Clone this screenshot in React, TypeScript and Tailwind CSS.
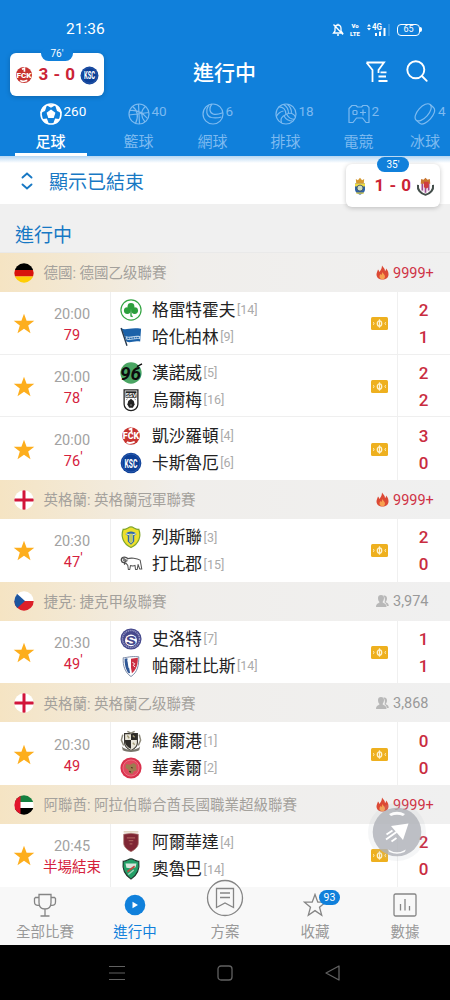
import type { ReactNode } from 'react';
import clsx from 'clsx';

type Team = { name: string; rank: number; crest: ReactNode };
type Match = { start: string; clock: string; tick?: boolean; home: Team; away: Team; score: [number, number] };
type League = { name: string; flag: ReactNode; viewers: string; hot?: boolean; matches: Match[] };

/* ---------- crests (24 x 24 viewBox) ---------- */

const Crest = ({ children, size = 22 }: { children: ReactNode; size?: number }) => (
  <svg viewBox="0 0 24 24" width={size} height={size} className="shrink-0 overflow-visible">
    {children}
  </svg>
);

const Fck = () => (
  <>
    <circle cx="12" cy="12" r="9.6" fill="#c8332f" />
    <path d="M9.5 5l3-1.2V8M7.5 18.5c3 2.5 5 .5 8.5 0" stroke="#fff" strokeWidth="2" fill="none" />
    <text x="12" y="15.8" textAnchor="middle" fontSize="9.5" fontWeight="900" fill="#fff" textLength="18" lengthAdjust="spacingAndGlyphs">FCK</text>
  </>
);

const Ksc = () => (
  <>
    <circle cx="12" cy="12" r="11.3" fill="#0d3f96" />
    <circle cx="12" cy="12" r="9.8" fill="none" stroke="#3e6fc0" strokeWidth=".6" />
    <text x="12" y="17" textAnchor="middle" fontSize="14" fontWeight="700" fill="#fff" textLength="14" lengthAdjust="spacingAndGlyphs">KSC</text>
  </>
);

const Furth = () => (
  <>
    <circle cx="12" cy="12" r="11" fill="#fff" stroke="#35a544" strokeWidth="1.3" />
    <circle cx="12" cy="8" r="3.7" fill="#2c9f3c" />
    <circle cx="8" cy="12.6" r="3.7" fill="#2c9f3c" />
    <circle cx="16" cy="12.6" r="3.7" fill="#2c9f3c" />
    <path d="M12 11v7.5l1.8.8" stroke="#2c9f3c" strokeWidth="1.5" fill="none" />
  </>
);

const Hertha = () => (
  <>
    <path d="M1.5 2.5c5 3 9-1.5 21.5.5l-1 14c-7-1.5-10 2-15 0L2.5 5z" fill="#1b62a9" />
    <path d="M1.2 2.2L7.6 21.5" stroke="#27394d" strokeWidth="1.5" />
    <path d="M6 11c5 2 9-1.5 16.5.2l-.2 3.3C16 13 12 16.5 7 14.7z" fill="#b9d2e8" />
    <path d="M8 13.2c5 1 7-1 13-.4" stroke="#1b62a9" strokeWidth="1.2" strokeDasharray="2 .7" fill="none" />
  </>
);

const Hannover = () => (
  <>
    <circle cx="12" cy="12" r="11.6" fill="#4aa563" />
    <text x="11.5" y="19.3" textAnchor="middle" fontSize="20" fontWeight="700" fontStyle="italic" fill="#0c0c0c" textLength="23" lengthAdjust="spacingAndGlyphs">96</text>
    <path d="M18.5 5l5.5-3" stroke="#0c0c0c" strokeWidth="1.5" />
  </>
);

const Ulm = () => (
  <>
    <path d="M4.5 1h15v15.5a7.5 7 0 0 1-15 0z" fill="#fff" stroke="#222" strokeWidth="1.4" />
    <path d="M6 2.5h12v7H6z" fill="#222" />
    <text x="12" y="8.3" textAnchor="middle" fontSize="6.5" fontWeight="700" fill="#fff">SSV</text>
    <path d="M8 17l1-4 3-2.5 3 2.5 1 4-2 3.5h-4z" fill="#222" />
    <path d="M6.5 12l2-1.5M17.5 12l-2-1.5M11 17.5h2" stroke="#999" strokeWidth="1" />
  </>
);

const Leeds = () => (
  <>
    <path d="M3.5 3.5c3 1 5.5-2.5 8.5-2.5s5.5 3.5 8.5 2.5c3 8 0 16-8.5 20C3.5 19.5.5 11.5 3.5 3.5z" fill="#eee02c" stroke="#7fa52c" strokeWidth="1.3" />
    <path d="M6 9c2-4 10-4 12 0l-2.5 1.5V17L12 20.5 8.5 17v-6.5z" fill="#2d67ae" />
    <path d="M10.2 8.5h3.6V17L12 19l-1.8-2z" fill="#f3ec7a" />
    <path d="M6.5 8.5L10 9.5M17.5 8.5L14 9.5" stroke="#e9f0d0" strokeWidth="1.2" />
    <path d="M12 9v9" stroke="#7fa23c" strokeWidth="1" />
  </>
);

const Derby = () => (
  <>
    <path d="M7.5 6.5c4-1.6 11-1 14.5 1.3l1.8 9.7h-2.3l-1.8-5-.9 5.500h-1.900l-.5-4.500c-2 1.200-3 .5-5 .2l-.7 4.300H9.100l-.6-4.500-2.500-3" fill="#fff" stroke="#555" strokeWidth="1.1" strokeLinejoin="round" />
    <path d="M8.5 6C5 3 1 5 1.500 8s4 3 4.500 1-2-2-2-.5M6 11l-1.500 1.500" fill="none" stroke="#4a4a4a" strokeWidth="1.5" />
    <path d="M3 5.500l5 3.500" stroke="#777" strokeWidth="2" />
  </>
);

const Slovacko = () => (
  <>
    <circle cx="12" cy="12" r="11.5" fill="#45488c" />
    <circle cx="12" cy="12" r="9.3" fill="none" stroke="#9a9cc6" strokeWidth="1.6" strokeDasharray="1.3 .8" />
    <circle cx="12" cy="13.5" r="6.5" fill="#fff" />
    <text x="12" y="18.5" textAnchor="middle" fontSize="14" fontWeight="700" fill="#45488c" textLength="11" lengthAdjust="spacingAndGlyphs">S</text>
  </>
);

const Pardubice = () => (
  <>
    <path d="M3.500 3C8 3 11 1 20.500 2c0 9-1 16.500-8.500 21.500C5.500 19 3 12 3.500 3z" fill="#fff" stroke="#71809f" strokeWidth="1" />
    <path d="M5 4l3-.5 3 16-1.500.5C6 16 5 10 5 4z" fill="#2f5795" />
    <path d="M12 4l7.500-1C19.500 10 18 16 13 20l-1-6z" fill="#ca2d40" />
    <path d="M13.500 8l2.500 1.500-1.500 2 2 1.500" stroke="#fff" strokeWidth="1" fill="none" />
    <path d="M8.500 5l1.500 9" stroke="#fff" strokeWidth="1.2" />
  </>
);

const PortVale = () => (
  <>
    <path d="M5 4h14v10c0 4-3 6.500-7 8.500-4-2-7-4.500-7-8.500z" fill="#e9e6da" stroke="#38352f" strokeWidth="1.2" />
    <path d="M12 4h6.500v7H12zM5.500 11H12v9.500C8 18.500 5.500 16 5.500 13z" fill="#2d2b28" />
    <path d="M8 1.500l4 2 4-2M3 5l-1.500 6L4 17M21 5l1.500 6L20 17" stroke="#8d8a7c" strokeWidth="1.6" fill="none" />
    <path d="M2 17.500c3 5.500 17 5.500 20 0l-1 4.500c-5 2.500-13 2.500-18 0z" fill="#77746a" />
    <path d="M8 6l2 3M14 6l2 2M14 14l2 2" stroke="#a39b77" strokeWidth="1.5" />
  </>
);

const Walsall = () => (
  <>
    <circle cx="12" cy="12" r="11.5" fill="#d9304c" />
    <circle cx="12" cy="12" r="8.8" fill="#e0485f" stroke="#ec7586" strokeWidth="1" />
    <path d="M6.500 7.500l4.500 1 4-2 3 2.500-.5 2.500 1 3-3.500 1-1.500 3-3.500-1-1-4-3-1.500z" fill="#9c7c50" />
    <path d="M12 11.500l2 .5M10 15.500l2 1" stroke="#4f331f" strokeWidth="1.3" />
  </>
);

const Wahda = () => (
  <>
    <path d="M4 3.500l8-1 8 1v9.500c0 4.500-4 7.500-8 9.500-4-2-8-5-8-9.500z" fill="#7f2634" stroke="#ad7c72" strokeWidth=".8" />
    <path d="M4 1h16" stroke="#c9b694" strokeWidth="1" />
    <path d="M7.500 7.500h9M9.500 10.500h5M10.500 14h3" stroke="#a95d59" strokeWidth="1.2" />
  </>
);

const Oruba = () => (
  <>
    <path d="M3.500 3.500C7 4 9 1 12 1s5 3 8.500 2.500c1 7-1 14.500-8.500 19.500C4.500 18 2.500 10.500 3.500 3.500z" fill="#23a067" stroke="#20332b" strokeWidth="1.2" />
    <path d="M6 6h12l-1 4-4 1.500-6-1z" fill="#d9e7dd" />
    <path d="M8 15l8-6" stroke="#c04a3f" strokeWidth="1.8" />
    <path d="M9 18l6-5" stroke="#a5d6bd" strokeWidth="1.5" />
  </>
);

const Palmas = () => (
  <>
    <path d="M6 9h12v7c0 3-2 5-6 6.500C8 21 6 19 6 16z" fill="#2f62a5" />
    <path d="M6 9h12v3.500H6z" fill="#f1dc3e" />
    <path d="M7 3.500l2.500 1.500L12 2l2.500 3L17 3.500 16.500 9h-9z" fill="#d59a31" />
    <circle cx="12" cy="14.5" r="3.6" fill="#cfdcc0" stroke="#3c5160" strokeWidth="1" />
    <path d="M7.500 20.500h9" stroke="#e1cf46" strokeWidth="1.5" />
  </>
);

const Valladolid = () => (
  <>
    <path d="M2.500 10c-1 6 3 11 9.500 12.500 6.500-1.500 10.500-6.500 9.500-12.500" fill="none" stroke="#434e4a" strokeWidth="2.6" />
    <path d="M6 7h12v7c0 3-2 5.500-6 6.500-4-1-6-3.500-6-6.500z" fill="#f3e9f1" />
    <path d="M8 8v9M12 8v12M16 8v9" stroke="#9c4a90" strokeWidth="2" />
    <path d="M6.500 2.500l3 1L12 1l2.500 2.500 3-1L18 8.500H6z" fill="#c9762f" />
    <path d="M10 6h6v7l-3 1.500-3-1.500z" fill="#cf3a40" />
  </>
);

/* ---------- flags ---------- */

const Flag = ({ id, children }: { id: string; children: ReactNode }) => (
  <svg viewBox="0 0 20 20" width="20" height="20" className="shrink-0">
    <clipPath id={id}><circle cx="10" cy="10" r="9.7" /></clipPath>
    <g clipPath={`url(#${id})`}>{children}</g>
  </svg>
);

const England = ({ id }: { id: string }) => (
  <Flag id={id}>
    <path d="M0 0h20v20H0z" fill="#fff" />
    <path d="M10 0v20M0 10h20" stroke="#d2153a" strokeWidth="3" />
  </Flag>
);

const leagues: League[] = [
  {
    name: '德國: 德國乙级聯賽',
    viewers: '9999+',
    hot: true,
    flag: <Flag id="de"><path d="M0 0h20v7H0z" fill="#000" /><path d="M0 7h20v6.500H0z" fill="#d8130c" /><path d="M0 13.500h20V20H0z" fill="#ffce05" /></Flag>,
    matches: [
      { start: '20:00', clock: '79', home: { name: '格雷特霍夫', rank: 14, crest: <Furth /> }, away: { name: '哈化柏林', rank: 9, crest: <Hertha /> }, score: [2, 1] },
      { start: '20:00', clock: '78', tick: true, home: { name: '漢諾威', rank: 5, crest: <Hannover /> }, away: { name: '烏爾梅', rank: 16, crest: <Ulm /> }, score: [2, 2] },
      { start: '20:00', clock: '76', tick: true, home: { name: '凱沙羅頓', rank: 4, crest: <Fck /> }, away: { name: '卡斯魯厄', rank: 6, crest: <Ksc /> }, score: [3, 0] },
    ],
  },
  {
    name: '英格蘭: 英格蘭冠軍聯賽',
    viewers: '9999+',
    hot: true,
    flag: <England id="en1" />,
    matches: [
      { start: '20:30', clock: '47', tick: true, home: { name: '列斯聯', rank: 3, crest: <Leeds /> }, away: { name: '打比郡', rank: 15, crest: <Derby /> }, score: [2, 0] },
    ],
  },
  {
    name: '捷克: 捷克甲级聯賽',
    viewers: '3,974',
    flag: <Flag id="cz"><path d="M0 0h20v10H0z" fill="#fff" /><path d="M0 10h20v10H0z" fill="#dc2029" /><path d="M0 0l11 10L0 20z" fill="#1c559f" /></Flag>,
    matches: [
      { start: '20:30', clock: '49', tick: true, home: { name: '史洛特', rank: 7, crest: <Slovacko /> }, away: { name: '帕爾杜比斯', rank: 14, crest: <Pardubice /> }, score: [1, 1] },
    ],
  },
  {
    name: '英格蘭: 英格蘭乙级聯賽',
    viewers: '3,868',
    flag: <England id="en2" />,
    matches: [
      { start: '20:30', clock: '49', home: { name: '維爾港', rank: 1, crest: <PortVale /> }, away: { name: '華素爾', rank: 2, crest: <Walsall /> }, score: [0, 0] },
    ],
  },
  {
    name: '阿聯酋: 阿拉伯聯合酋長國職業超級聯賽',
    viewers: '9999+',
    hot: true,
    flag: <Flag id="ae"><path d="M0 0h20v7H0z" fill="#15803f" /><path d="M0 7h20v6H0z" fill="#fff" /><path d="M0 13h20v7H0z" fill="#000" /><path d="M0 0h6.500v20H0z" fill="#e2142a" /></Flag>,
    matches: [
      { start: '20:45', clock: '半場結束', home: { name: '阿爾華達', rank: 4, crest: <Wahda /> }, away: { name: '奧魯巴', rank: 14, crest: <Oruba /> }, score: [2, 0] },
    ],
  },
];

const sports = [
  {
    name: '足球', count: 260, width: 'w-[101px]',
    icon: (
      <>
        <circle cx="11" cy="11" r="10" strokeWidth="1.6" />
        <path d="M11 7.300l3.700 2.700-1.400 4.300H8.700L7.300 10zM7 1.800L11 4l4-2.200M1.200 9l3.300-1.500L5.800 3.500 3 5zM20.800 9l-3.300-1.500-1.300-4L19 5zM3 16.500l3.500-.3 1.500 4-2.500-.7zM19 16.500l-3.500-.3-1.500 4 2.500-.7z" fill="currentColor" />
      </>
    ),
  },
  {
    name: '籃球', count: 40, width: 'w-[75px]',
    icon: (
      <>
        <circle cx="11" cy="11" r="10" />
        <path d="M10.500 1l1 20M1 12L21 9.500M4.500 3.500c5 3.500 6.500 10 3 17M17.500 3.500c-5 4-5 10-.5 15.500M2 7.500c5-.5 12 1 17.500 8" />
      </>
    ),
  },
  {
    name: '網球', count: 6, width: 'w-[73px]',
    icon: (
      <>
        <circle cx="11" cy="11" r="10" />
        <path d="M10 1c-3.500 4-2.500 9 1.500 10.200 4.500.8 7-.7 9.500-1.700M6.800 2C3.500 7 4 13 9.500 14.500c4 .8 7 .3 10-.5" />
      </>
    ),
  },
  {
    name: '排球', count: 18, width: 'w-[73px]',
    icon: (
      <>
        <circle cx="11" cy="11" r="10" />
        <path d="M11 11.500c0-5-3-8-7.500-7.700M11 11.500c4.500-2.500 8-1 9.500 2.500M11 11.500c-4.500 2-6 5-4.500 8.500M13.500 10.500c0-4-2-7.500-5-9M16.500 9.800C16.500 6 15 3.500 12.500 1.500M8.500 8c-3 .5-5.500 2.500-7.200 5.500M9 13c2 3.500 5 5 8.500 5M12 11.800c1.500 3 4 4.500 7.500 4.500" />
      </>
    ),
  },
  {
    name: '電競', count: 2, width: 'w-[73px]',
    icon: (
      <>
        <path d="M4 2.500h4L9.500 4h4L15 2.500h4l2 2v15h-3L14.500 15h-6L5 19.500H1v-14z" strokeLinejoin="round" />
        <rect x="5" y="7.5" width="4" height="4" rx="1" />
        <path d="M15 6.500v6M12 9.500h6" />
      </>
    ),
  },
  {
    name: '冰球', count: 4, width: 'w-[60px]',
    icon: (
      <g transform="rotate(-48 11 11)">
        <ellipse cx="11" cy="8.5" rx="10.5" ry="5.3" />
        <path d="M.5 8.500v4.500c0 7 21 7 21 0V8.500" />
      </g>
    ),
  },
];

function ScoreCard({ clock, home, away, score, className }: { clock: string; home: ReactNode; away: ReactNode; score: string; className: string }) {
  return (
    <div className={clsx('absolute z-20 flex h-[43px] w-[94px] items-center justify-between rounded-md bg-white pt-[1px] pr-[5px] pl-[4px] shadow-[0_1px_5px_rgba(0,0,0,0.22)]', className)}>
      <span className="absolute -top-[7px] left-[31px] flex h-[15px] w-[32px] items-center justify-center rounded-full bg-[#1080db] text-[10px] text-white">
        {clock}
      </span>
      <Crest size={20}>{home}</Crest>
      <span className="text-[17px] font-bold tracking-[0.5px] whitespace-pre text-[#cb2336]">{score}</span>
      <Crest size={19}>{away}</Crest>
    </div>
  );
}

function StatusBar() {
  return (
    <div className="flex h-[52px] items-center justify-between pt-[7px] pr-[28px] pl-[66px] text-white">
      <span className="text-[15.5px]">21:36</span>
      <div className="flex items-center">
        <svg width="12" height="13" viewBox="0 0 12 13" fill="none" stroke="currentColor" strokeWidth="1.3">
          <path d="M1.500 10h9L9 8V5.500C9 3.500 7.800 2 6 2S3 3.500 3 5.500V8zM6 .8V2M5 12h2M1.500 1.500l9.500 10" />
        </svg>
        <span className="ml-[5px] flex w-[12px] flex-col items-center text-[6px] leading-[8px] font-black">
          <span>Vo</span>
          <span>LTE</span>
        </span>
        <svg width="23" height="14" viewBox="0 0 23 14" className="ml-[6px] overflow-visible" fill="currentColor">
          <path d="M0 3.500L2 1l2 2.500zM0 5h4L2 7.500zM8 10h2v3H8zM12 8.500h2V13h-2zM16.500 5h2v8h-2z" />
          <path d="M21.500 1h1v12h-1z" opacity=".35" />
          <text x="5" y="6.8" fontSize="8.5" fontWeight="700" textLength="10" lengthAdjust="spacingAndGlyphs">4G</text>
        </svg>
        <span className="ml-[7px] flex h-[12px] w-[23px] items-center justify-center rounded-[4px] border-[1.5px] border-white text-[9px] leading-none">65</span>
        <span className="h-[5px] w-[2px] rounded-r bg-white" />
      </div>
    </div>
  );
}

function Header() {
  return (
    <header className="relative z-10 flex h-[156px] shrink-0 flex-col overflow-hidden bg-[#1080db] text-white">
      <StatusBar />
      <div className="flex h-[42px] items-center pr-[22px]">
        <h1 className="ml-[193px] flex-1 pt-[2px] text-[21px] font-medium">進行中</h1>
        <svg width="22" height="22" viewBox="0 0 22 22" className="-mt-[2px]" fill="none" stroke="currentColor" strokeWidth="1.8">
          <path d="M.5 1.500h17.500l-5.500 7.500v3M.5 1.500L6.500 9v12M14.500 11.300h6M12.500 15.500H20M12.500 20h9" />
        </svg>
        <svg width="22" height="22" viewBox="0 0 22 22" className="-mt-[4px] ml-[18px]" fill="none" stroke="currentColor" strokeWidth="1.9">
          <circle cx="9.8" cy="9.8" r="8.5" />
          <path d="M15.900 16l4.800 4.800" strokeLinecap="round" />
        </svg>
      </div>
      <nav className="flex h-[62px] overflow-hidden">
        {sports.map((sport, i) => (
          <div
            key={sport.name}
            className={clsx('relative flex shrink-0 flex-col items-center pt-[9px]', sport.width, i === 0 ? 'text-white' : 'text-[#7dbaf0]')}
          >
            <span className="relative flex">
              <svg width="22" height="22" viewBox="0 0 22 22" fill="none" stroke="currentColor" strokeWidth="1.2">
                {sport.icon}
              </svg>
              <span className="absolute top-0 left-[24px] text-[13.5px] leading-[17px]">{sport.count}</span>
            </span>
            <span className={clsx('mt-[7px] text-[15px] leading-[20px]', i === 0 && 'font-medium')}>{sport.name}</span>
            {i === 0 && <span className="mt-[1px] h-[3px] w-[72px] shrink-0 bg-white" />}
          </div>
        ))}
      </nav>
    </header>
  );
}

function TeamLine({ team }: { team: Team }) {
  return (
    <div className="flex h-[27px] items-center">
      <Crest>{team.crest}</Crest>
      <span className="ml-[10px] pt-[1px] text-[16.7px] text-[#222]">{team.name}</span>
      <span className="ml-[1.5px] pt-[1px] text-[12.5px] text-[#aaa]">[{team.rank}]</span>
    </div>
  );
}

function MatchRow({ match, last }: { match: Match; last: boolean }) {
  return (
    <div className={clsx('flex h-[62.7px] shrink-0 items-stretch bg-white', !last && 'border-b border-[#efefef]')}>
      <div className="flex w-[34px] items-center pt-[2px] pl-[13px]">
        <svg width="22" height="22" viewBox="0 0 22 22" className="shrink-0" fill="#fdae1d">
          <path d="M11 .8l2.600 7h7.700l-6.100 4.700 2.300 7.700L11 15.700l-6.500 4.500 2.300-7.700L.7 7.800h7.700z" />
        </svg>
      </div>
      <div className="flex w-[76px] flex-col items-center justify-center pt-[4px] text-[14.5px] leading-[21px]">
        <span className="text-[#a2a2a2]">{match.start}</span>
        <span className="relative whitespace-nowrap text-[#d5213d]">
          {match.clock}
          {match.tick && <span className="absolute -top-[4px] left-full">'</span>}
        </span>
      </div>
      <div className="flex flex-1 flex-col justify-center border-l border-[#efefef] pt-[1px] pl-[9px]">
        <TeamLine team={match.home} />
        <TeamLine team={match.away} />
      </div>
      <div className="flex w-[26px] items-center pt-[1px]">
        <svg width="17" height="13" viewBox="0 0 17 13">
          <rect width="17" height="13" rx="1.5" fill="#eeb01f" />
          <ellipse cx="8.5" cy="6.5" rx="2.2" ry="2.7" fill="none" stroke="#fff3cf" strokeWidth="1.3" />
          <path d="M8.500 2.300v8.400" stroke="#fff3cf" strokeWidth="1.2" />
          <path d="M2 5.300l1.300 1.200L2 7.700M15 5.300l-1.300 1.200L15 7.700" stroke="#fff3cf" strokeWidth="1" fill="none" />
        </svg>
      </div>
      <div className="flex w-[53px] flex-col items-center justify-center border-l border-[#f0f0f0] pt-[2px] pr-[1px] text-[17px] leading-[27px] font-medium text-[#c92c40]">
        <span>{match.score[0]}</span>
        <span>{match.score[1]}</span>
      </div>
    </div>
  );
}

function LeagueHeader({ league }: { league: League }) {
  return (
    <div className="flex h-[39px] shrink-0 items-center bg-gradient-to-r from-[#f5e4c3] via-[#f0eeeb] via-40% to-[#f0f0f0] pr-[15px] pl-[14px] text-[14.5px] text-[#a4a19c]">
      {league.flag}
      <span className="ml-[9.5px] flex-1 pt-[3px] whitespace-nowrap">{league.name}</span>
      {league.hot ? (
        <svg width="13" height="15" viewBox="0 0 13 15">
          <path d="M6 .5c1 2 3 3 3 5.500 1-.5 1-1.500 1-2.500 2 2 2.500 4 2.500 6 0 3-2.500 5-6 5s-6-2-6-5c0-2 1-3 1.500-5 .8.500 1 1.500 1.300 2.500C5 5 6 3 6 .5z" fill="#dc4935" />
          <path d="M6.500 7c.5 2 2.500 2.500 2.500 4.500 0 2-1.200 2.800-2.700 2.800S3.500 13.200 3.500 11.500c0-1 .5-1.500.8-2.500l1.200 1z" fill="#f7a04f" />
        </svg>
      ) : (
        <svg width="13" height="12" viewBox="0 0 13 12" fill="#b8b8b8">
          <path d="M5 0c2 0 3 1.200 3 3S7 6.500 6.500 7c.5 1.500 4 1 4 5H0c0-4 3.500-3.500 3.500-5C2.500 6 2 5 2 3s1-3 3-3z" />
          <path d="M7.500.5C10.500.5 11 2 11 3.500S10.300 6 9.700 6.800c.4 1.200 3 1 3.100 4.200h-2c-.3-2.500-1.500-3-2.300-3.800C9.300 5.500 9 2.500 7.500.5z" />
        </svg>
      )}
      <span className={clsx('ml-1 w-[42px] pt-[2px] text-[14.5px] whitespace-nowrap', league.hot ? 'text-[#cf3346]' : 'text-[#999]')}>{league.viewers}</span>
    </div>
  );
}

const navItems = [
  { label: '全部比賽', icon: <path d="M6 1.500h12v8c0 4-2 6.500-6 6.500s-6-2.500-6-6.500zM6 4.500H2.500l-1 1V9c0 2.500 1.500 4 4.900 3.300M18 4.500h3.500l1 1V9c0 2.500-1.500 4-4.900 3.300M12 16v7M7.500 23h9" /> },
  { label: '進行中', icon: <><circle cx="12" cy="12" r="10.3" fill="#1080db" stroke="none" /><path d="M9.500 8.700l5.500 3.300-5.500 3.300z" fill="#fff" stroke="none" /></> },
  { label: '方案', icon: null },
  { label: '收藏', badge: 93, icon: <path d="M12 1.500l2.800 7.700h7.700l-6 5 2.200 8L12 17.600l-6.700 4.600 2.200-8-6-5h7.700z" /> },
  { label: '數據', icon: <><rect x="1" y="1" width="22" height="22" rx="1.5" /><path d="M7.500 11v6.500M12 6v11.500M16.500 13v4.500" /></> },
];

function BottomNav() {
  return (
    <nav className="relative z-10 flex h-[58px] shrink-0 bg-[#f8f8f8]">
      {navItems.map((item) => (
        <div
          key={item.label}
          className={clsx('relative flex flex-1 flex-col items-center pt-[6px]', item.label === '進行中' ? 'text-[#1080db]' : 'text-[#999]')}
        >
          {item.icon ? (
            <svg width="24" height="24" viewBox="0 0 24 24" fill="none" stroke="#858585" strokeWidth="1.3">
              {item.icon}
            </svg>
          ) : (
            <svg width="38" height="38" viewBox="0 0 38 38" className="-mt-[14px]" fill="none" stroke="#858585" strokeWidth="1.3">
              <circle cx="19" cy="19" r="17.5" fill="#f8f8f8" />
              <path d="M10.500 9.500h17v19L19 24l-8.500 4.500zM14 14h10M14 18.500h10" />
            </svg>
          )}
          {item.badge && (
            <span className="absolute top-[3px] left-[49px] flex h-[15px] w-[21px] items-center justify-center rounded-full bg-[#1080db] text-[10.5px] text-white">
              {item.badge}
            </span>
          )}
          <span className="mt-[6px] text-[14.5px] leading-[20px]">{item.label}</span>
        </div>
      ))}
    </nav>
  );
}

function App() {
  return (
    <div className="relative flex h-[1000px] w-[450px] flex-col overflow-hidden bg-white font-[Roboto,'Noto_Sans_CJK_TC',sans-serif]">
      <Header />
      <main className="flex h-[731px] shrink-0 flex-col overflow-hidden">
        <div className="flex h-[48px] shrink-0 items-center bg-gradient-to-b from-[#b5d6f2] to-white to-[7px] pt-[2px] pl-[21px] text-[19px] text-[#1778c4]">
          <svg width="12" height="18" viewBox="0 0 12 18" fill="none" stroke="currentColor" strokeWidth="1.9" strokeLinecap="round">
            <path d="M1.500 5.500L6 1.500l4.500 4M1.500 12.500l4.500 4 4.500-4" />
          </svg>
          <span className="ml-[16px] pt-[4px]">顯示已結束</span>
        </div>
        <div className="flex h-[49px] shrink-0 items-center border-b border-[#e9e9e9] bg-[#f0f0f0] pt-[16px] pl-[15px] text-[19px] text-[#1778c4]">進行中</div>
        {leagues.map((league) => (
          <section key={league.name} className="shrink-0">
            <LeagueHeader league={league} />
            {league.matches.map((match, i) => (
              <MatchRow key={match.home.name} match={match} last={i === league.matches.length - 1} />
            ))}
          </section>
        ))}
      </main>
      <BottomNav />
      <footer className="flex flex-1 items-center justify-center gap-[92px] bg-black text-[#616161]">
        <svg width="16" height="16" viewBox="0 0 16 16" stroke="currentColor" strokeWidth="1.2">
          <path d="M0 1.500h16M0 8h16M0 14.500h16" />
        </svg>
        <svg width="16" height="16" viewBox="0 0 16 16" fill="none" stroke="currentColor" strokeWidth="1.3">
          <rect x="1" y="1" width="14" height="14" rx="3" />
        </svg>
        <svg width="16" height="16" viewBox="0 0 16 16" fill="none" stroke="currentColor" strokeWidth="1.3" strokeLinejoin="round">
          <path d="M1 8l13-7v14z" />
        </svg>
      </footer>

      <ScoreCard clock="76'" home={<Fck />} away={<Ksc />} score="3 - 0" className="top-[53px] left-[10px]" />
      <ScoreCard clock="35'" home={<Palmas />} away={<Valladolid />} score="1 - 0" className="top-[164px] left-[346px]" />

      <svg width="62" height="62" viewBox="0 0 62 62" className="absolute top-[801px] left-[366px] z-20">
        <circle cx="31" cy="31" r="29" fill="#b8bcc6" opacity=".14" />
        <circle cx="31" cy="31" r="24.3" fill="#afb1b8" opacity=".8" />
        <path d="M42.500 22.500L25 25l12 14z" fill="#fff" />
        <path d="M20.500 33.500l6-4M20 38.500l10.500-7.500M25.500 40.500l5-3.500" stroke="#fff" strokeWidth="1.9" />
        <path d="M23 13Q31 8.500 39 13L37 15Q31 12.500 25 15zM22 48.500Q31 54 40 48.500L38.500 51Q31 54.500 23.500 51z" fill="#fff" opacity=".95" />
      </svg>
    </div>
  );
}

export default App;
